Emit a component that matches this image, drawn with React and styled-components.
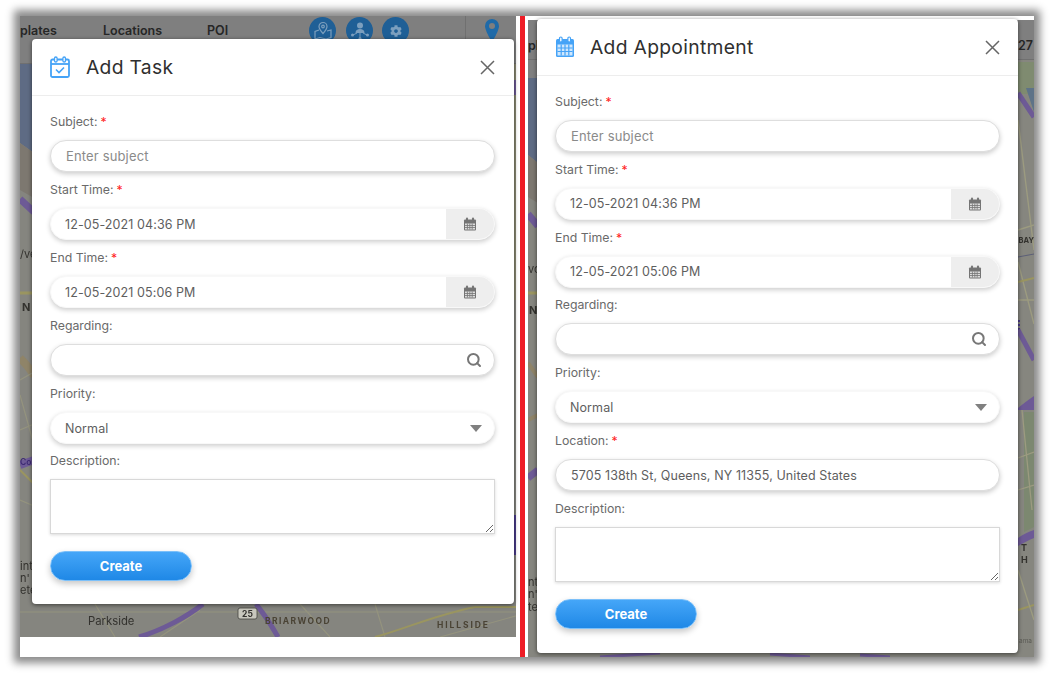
import React from "react";
import styled, { createGlobalStyle } from "styled-components";
import { FaCog } from "react-icons/fa";
import { Search } from "lucide-react";

const FONT = `Inter, "Open Sans", "Liberation Sans", sans-serif`;

const Global = createGlobalStyle`
  html, body { margin: 0; padding: 0; background: #fff; }
  body { font-family: ${FONT}; width: 1054px; height: 673px; overflow: hidden; }
  * { box-sizing: border-box; }
`;

const Page = styled.div`
  padding: 16px 20px;
`;
const Frame = styled.div`
  width: 1014px;
  height: 641px;
  display: flex;
  align-items: flex-start;
  background: #fff;
  box-shadow: 0 0 8px 6px #8c8c8c;
`;
const Panel = styled.section`
  position: relative;
  flex: none;
  width: ${(p) => p.$width}px;
  height: ${(p) => p.$height}px;
  margin-top: ${(p) => p.$top || 0}px;
  margin-left: ${(p) => p.$left || 0}px;
`;
const Divider = styled.div`
  flex: none;
  width: 4.5px;
  height: 641px;
  margin-left: 4px;
  background: #ee1c25;
`;
const Backdrop = styled.svg`
  position: absolute;
  inset: 0;
  display: block;
  filter: blur(0.6px);
`;
const TopBar = styled.div`
  position: relative;
  display: flex;
  align-items: center;
  height: ${(p) => p.$height}px;
  padding: ${(p) => p.$padTop}px 0 ${(p) => p.$padBottom}px;
  color: #262626;
  font-size: 12.5px;
  font-weight: 600;
  overflow: hidden;
  border-bottom: 1px solid #707070;
  background: #7f7f7f;
`;
const NavText = styled.span`
  flex: none;
  width: ${(p) => p.$width}px;
  margin-left: ${(p) => p.$gap}px;
  white-space: nowrap;
`;
const RoundButton = styled.span`
  flex: none;
  width: 27px;
  height: 27px;
  margin-left: ${(p) => p.$gap}px;
  border-radius: 50%;
  background: #1f5f96;
  color: #7c9fbe;
  display: flex;
  align-items: center;
  justify-content: center;
`;
const VRule = styled.span`
  flex: none;
  align-self: flex-start;
  width: 1px;
  height: 47px;
  margin-left: 56px;
  background: #707070;
`;
const PinSlot = styled.span`
  flex: none;
  margin-left: 19px;
  display: flex;
`;

const Modal = styled.div`
  position: absolute;
  left: ${(p) => p.$left}px;
  top: ${(p) => p.$top}px;
  width: ${(p) => p.$width}px;
  background: #fff;
  border-radius: 4px;
  box-shadow: 0 1px 4px rgba(0, 0, 0, 0.55);
`;
const ModalHeader = styled.header`
  display: flex;
  align-items: center;
  height: 57px;
  padding: 0 ${(p) => p.$right}px 0 18px;
  border-bottom: 1px solid #ededed;
`;
const IconSlot = styled.span`
  flex: none;
  width: ${(p) => p.$width}px;
  display: flex;
`;
const Title = styled.h2`
  flex: 1;
  margin: 0;
  font-size: 19.3px;
  font-weight: 400;
  letter-spacing: 0.3px;
  color: #2f2f2f;
`;
const Close = styled.svg`
  display: block;
  flex: none;
`;
const Body = styled.div`
  padding: 17px ${(p) => p.$right}px ${(p) => p.$bottom}px 18px;
`;
const Field = styled.div`
  margin-bottom: ${(p) => p.$gap}px;
`;
const Label = styled.label`
  display: block;
  height: 18px;
  margin-top: ${(p) => p.$lift || 0}px;
  margin-bottom: 9px;
  font-size: 12.3px;
  line-height: 18px;
  color: #6a6a6a;
`;
const Star = styled.span`
  color: #f22;
  margin-left: 3px;
`;
const Control = styled.div`
  display: flex;
  align-items: center;
  height: 32px;
  border-radius: 16px;
  background: #fff;
  overflow: hidden;
  border: 1px solid ${(p) => (p.$bare ? "#f8f8f8" : "#dedede")};
  box-shadow: 0 2px 5px rgba(0, 0, 0, 0.2);
  font-size: ${(p) => (p.$placeholder ? "13px" : "12.5px")};
  letter-spacing: ${(p) => (p.$placeholder ? "0.15px" : "0.1px")};
  color: ${(p) => (p.$placeholder ? "#8a8a8a" : "#5e5e5e")};
`;
const Value = styled.span`
  flex: 1;
  padding-left: ${(p) => p.$pad}px;
  white-space: nowrap;
`;
const Addon = styled.span`
  flex: none;
  width: 48px;
  align-self: stretch;
  background: #eee;
  display: flex;
  align-items: center;
  justify-content: center;
`;
const SearchSlot = styled.span`
  display: flex;
  color: #777;
  margin-right: 12px;
`;
const Caret = styled.span`
  flex: none;
  margin-right: 12px;
  width: 0;
  height: 0;
  border-left: 6px solid transparent;
  border-right: 6px solid transparent;
  border-top: 7px solid #808080;
`;
const TextArea = styled.textarea`
  display: block;
  width: 100%;
  height: 55px;
  margin: 0 0 17px;
  padding: 0;
  background: #fff;
  border: 1px solid #d8d8d8;
  border-radius: 0;
  outline: none;
  box-shadow: 0 1px 3px rgba(0, 0, 0, 0.15);
`;
const Submit = styled.button`
  display: block;
  width: 142px;
  height: 30px;
  padding: 0;
  border: 1px solid #7cc0f9;
  border-radius: 15px;
  background: linear-gradient(#45a6f8, #1f88e6);
  box-shadow: 0 3px 6px rgba(0, 0, 0, 0.22);
  color: #fff;
  font-family: ${FONT};
  font-size: 13px;
  font-weight: 700;
`;

const CalendarMini = () => (
  <svg width="14" height="14" viewBox="0 0 14 14">
    <rect x="1" y="2.5" width="12" height="11" rx="1" fill="#747474" />
    <rect x="3" y="0.5" width="2" height="4" rx="1" fill="#747474" />
    <rect x="9" y="0.5" width="2" height="4" rx="1" fill="#747474" />
    <path d="M2 6.5h10v6H2z" fill="#ddd" />
    <path d="M2 8.5h10M2 10.5h10M4.4 6.5v6M6.8 6.5v6M9.2 6.5v6" stroke="#747474" strokeWidth=".8" />
  </svg>
);
const TaskIcon = () => (
  <svg width="20" height="22" viewBox="0 0 20 22" fill="none">
    <rect x="1" y="3.5" width="18" height="17.5" rx="1.5" stroke="#45a3f7" strokeWidth="1.8" />
    <path d="M1 8h18" stroke="#45a3f7" strokeWidth="1.8" />
    <rect x="4.5" y="1" width="2.6" height="5" rx="1.3" fill="#fff" stroke="#45a3f7" strokeWidth="1.3" />
    <rect x="12.9" y="1" width="2.6" height="5" rx="1.3" fill="#fff" stroke="#45a3f7" strokeWidth="1.3" />
    <path d="M6 13.5l3 3 5-5" stroke="#45a3f7" strokeWidth="1.6" />
  </svg>
);
const AppointmentIcon = () => (
  <svg width="20" height="22" viewBox="0 0 20 22" fill="none">
    <rect x="1" y="3" width="18" height="18" rx="1.5" fill="#45a3f7" />
    <rect x="4.5" y="1" width="2.6" height="5" rx="1.3" fill="#fff" stroke="#45a3f7" strokeWidth="1.2" />
    <rect x="12.9" y="1" width="2.6" height="5" rx="1.3" fill="#fff" stroke="#45a3f7" strokeWidth="1.2" />
    <path d="M2.5 8.5h15v11h-15z" fill="#cfe7fd" />
    <path d="M2.5 12h15M2.5 15.5h15M6.2 8.5v11M10 8.5v11M13.8 8.5v11" stroke="#45a3f7" strokeWidth="1.2" />
  </svg>
);
const MapPinGlyph = () => (
  <svg width="20" height="20" viewBox="0 0 20 20" fill="none" stroke="currentColor" strokeWidth="1.2">
    <path d="M10 1.5a4 4 0 0 1 4 4c0 2.6-4 7-4 7s-4-4.4-4-7a4 4 0 0 1 4-4z" />
    <circle cx="10" cy="5.5" r="1.3" />
    <path d="M6 9l-4 1.5V18l5-1.5 6 1.5 5-1.5V9l-4 1" />
  </svg>
);
const NetworkGlyph = () => (
  <svg width="20" height="20" viewBox="0 0 20 20" fill="currentColor">
    <circle cx="10" cy="4.5" r="3" />
    <path d="M5.5 12c0-3 2-4 4.5-4s4.5 1 4.5 4z" />
    <circle cx="2.5" cy="14" r="1.5" />
    <circle cx="10" cy="17.5" r="1.5" />
    <circle cx="17.5" cy="14" r="1.5" />
    <path d="M3 14l4-2M17 14l-4-2M10 12v5" stroke="currentColor" />
  </svg>
);
const BigPin = () => (
  <svg width="14" height="23" viewBox="0 0 14 23">
    <path d="M7 0a7 7 0 0 1 7 7c0 5-7 16-7 16S0 12 0 7a7 7 0 0 1 7-7z" fill="#1f6aa8" />
    <circle cx="7" cy="7" r="3" fill="#7f7f7f" />
  </svg>
);
const CloseIcon = () => (
  <Close width="15" height="15" viewBox="0 0 15 15" fill="none" stroke="#666" strokeWidth="1.5">
    <path d="M1 1l13 13M14 1L1 14" />
  </Close>
);

const mapFont = { fontFamily: "Inter, sans-serif" };
const labelStyle = { ...mapFont, fill: "#33322e" };
const districtStyle = { ...mapFont, fill: "#4a4335" };
const highwayLabelStyle = { ...mapFont, fill: "#3d2a73" };
const PURPLE = "#6d5a96";
const ROAD = "#94937e";
const YELLOW = "#9a9560";

const LeftMap = () => (
  <Backdrop width="496" height="621" viewBox="20 16 496 621">
    <rect x="20" y="16" width="496" height="621" fill="#85857f" />
    <path d="M20 63h14v90l-14-10z" fill="#5e6b84" />
    <path d="M20 143l14 10v45l-14-8z" fill="#7d7870" />
    <path d="M20 199l14 13" stroke={PURPLE} strokeWidth="7" />
    <path d="M20 293h14" stroke={YELLOW} strokeWidth="3" />
    <path d="M20 358c6 6 10 10 14 18" stroke="#8f8468" strokeWidth="8" fill="none" />
    <path d="M20 380l14-8M20 430l14-6M20 500l14 6M20 395l14 50" stroke={ROAD} strokeWidth="1.2" fill="none" />
    <path d="M20 465l14-5" stroke={PURPLE} strokeWidth="8" />
    <path d="M20 470l14 14" stroke={YELLOW} strokeWidth="2" />
    <text x="20" y="465" fontSize="8.5" fontWeight="600" style={highwayLabelStyle}>Co</text>
    <text x="20" y="258" fontSize="11" style={labelStyle}>/ve</text>
    <text x="22" y="311" fontSize="11" fontWeight="700" style={labelStyle}>N</text>
    <text x="20" y="570" fontSize="11" style={labelStyle}>int</text>
    <text x="20" y="582" fontSize="11" style={labelStyle}>n'</text>
    <text x="20" y="594" fontSize="11" style={labelStyle}>ete</text>
    <path d="M20 612h500M95 604l20 33M200 610l-40 27M300 604l30 33M375 604l10 33M440 637l90-25" stroke={ROAD} strokeWidth="1.2" fill="none" />
    <path d="M203 604c-15 12-40 26-64 33" stroke={PURPLE} strokeWidth="5" fill="none" />
    <path d="M256 604c8 10 16 22 22 33" stroke={PURPLE} strokeWidth="5" fill="none" />
    <path d="M375 637c30-8 60-22 100-30h41" stroke={YELLOW} strokeWidth="2" fill="none" />
    <rect x="238" y="608" width="19" height="11" rx="2" fill="#c8c7bd" stroke="#44443f" strokeWidth=".8" />
    <text x="247.5" y="617" textAnchor="middle" fontSize="8.5" fontWeight="700" style={labelStyle}>25</text>
    <text x="88" y="625" fontSize="11.3" style={labelStyle}>Parkside</text>
    <text x="265" y="624" fontSize="8.5" fontWeight="700" letterSpacing="1.4" style={districtStyle}>BRIARWOOD</text>
    <text x="437" y="628" fontSize="8.5" fontWeight="700" letterSpacing="1.9" style={districtStyle}>HILLSIDE</text>
    <path d="M515 60v240" stroke="#8c8a6d" strokeWidth="1.4" />
    <path d="M515 80v15" stroke={PURPLE} strokeWidth="2" />
    <path d="M515 515v40" stroke="#4a3a8a" strokeWidth="2" />
  </Backdrop>
);

const RightMap = () => (
  <Backdrop width="506" height="637" viewBox="528 20 506 637">
    <rect x="528" y="20" width="506" height="637" fill="#86867f" />
    <rect x="528" y="20" width="10" height="58" fill="#7f7f7f" />
    <path d="M528 78h10v85l-10-8z" fill="#5e6b84" />
    <path d="M528 155l10 8v40l-10-6z" fill="#7d7870" />
    <path d="M528 214l10 12" stroke={PURPLE} strokeWidth="7" />
    <path d="M528 293h10" stroke={YELLOW} strokeWidth="3" />
    <path d="M528 363l10 14M528 420l10-5" stroke="#8f8468" strokeWidth="4" />
    <path d="M528 478l10-8" stroke={PURPLE} strokeWidth="7" />
    <text x="528" y="273" fontSize="11" style={labelStyle}>vc</text>
    <text x="529" y="314" fontSize="11" fontWeight="700" style={labelStyle}>N</text>
    <text x="528" y="586" fontSize="11" style={labelStyle}>nt</text>
    <text x="528" y="598" fontSize="11" style={labelStyle}>n'</text>
    <text x="528" y="611" fontSize="11" style={labelStyle}>te</text>
    <path d="M1018 62h16v32h-16z" fill="#7f8b70" />
    <path d="M1026 88l8 0v24z" fill="#5e7388" />
    <path d="M1018 93l16 24" stroke={PURPLE} strokeWidth="5" />
    <path d="M1018 120l16 130M1018 230l16-5M1018 262l16 62M1018 300h16" stroke="#9c9b80" strokeWidth="1.4" fill="none" />
    <path d="M1018 282l16-4" stroke={YELLOW} strokeWidth="2" />
    <path d="M1018 257l16-3" stroke="#5c5f78" strokeWidth="1" />
    <text x="1018.5" y="243" fontSize="7.5" fontWeight="700" style={labelStyle}>BAY</text>
    <path d="M1019 320v14" stroke="#4a3a8a" strokeWidth="2" strokeDasharray="2 2" />
    <path d="M1018 330l16 30" stroke={PURPLE} strokeWidth="5" />
    <path d="M1018 408c5-4 10-8 16-12v14h-16z" fill={PURPLE} />
    <path d="M1024 412h10v115l-10 5z" fill="#7c8870" />
    <path d="M1018 538c6-4 10-6 16-8v8c-6 2-10 5-16 8z" fill={PURPLE} />
    <path d="M1022 410l10 100M1018 490l16-5M1018 458l16-6" stroke="#9c9b80" strokeWidth="1.3" fill="none" />
    <text x="1021" y="551" fontSize="9" fontWeight="700" style={labelStyle}>T</text>
    <text x="1021" y="563" fontSize="9" fontWeight="700" style={labelStyle}>H</text>
    <path d="M1018 610l16-5" stroke={YELLOW} strokeWidth="2" />
    <path d="M1018 570l16 50" stroke="#9c9b80" strokeWidth="1.3" />
    <text x="1019" y="643" fontSize="6.5" style={{ ...mapFont, fill: "#5c5c56" }}>ama</text>
    <path d="M600 657l60-4M770 654l40 3M860 655l30 2" stroke={PURPLE} strokeWidth="3" />
  </Backdrop>
);

const TextField = ({ label, required, gap, placeholder, value }) => (
  <Field $gap={gap}>
    <Label>
      {label}
      {required && <Star>*</Star>}
    </Label>
    <Control $placeholder={!!placeholder}>
      <Value $pad={15}>{placeholder || value}</Value>
    </Control>
  </Field>
);
const DateField = ({ label, gap, value }) => (
  <Field $gap={gap}>
    <Label>
      {label}
      <Star>*</Star>
    </Label>
    <Control $bare>
      <Value $pad={14}>{value}</Value>
      <Addon>
        <CalendarMini />
      </Addon>
    </Control>
  </Field>
);
const SearchField = ({ label, gap }) => (
  <Field $gap={gap}>
    <Label>{label}</Label>
    <Control>
      <Value $pad={15} />
      <SearchSlot>
        <Search size={16} strokeWidth={3} />
      </SearchSlot>
    </Control>
  </Field>
);
const SelectField = ({ label, gap, value }) => (
  <Field $gap={gap}>
    <Label>{label}</Label>
    <Control $bare>
      <Value $pad={14}>{value}</Value>
      <Caret />
    </Control>
  </Field>
);

const Dialog = ({ title, icon, iconWidth, left, top, width, right, location, gap, lift, bottom }) => (
  <Modal $left={left} $top={top} $width={width}>
    <ModalHeader $right={right}>
      <IconSlot $width={iconWidth}>{icon}</IconSlot>
      <Title>{title}</Title>
      <CloseIcon />
    </ModalHeader>
    <Body $bottom={bottom} $right={right}>
      <TextField label="Subject:" required gap={gap} placeholder="Enter subject" />
      <DateField label="Start Time:" gap={gap} value="12-05-2021 04:36 PM" />
      <DateField label="End Time:" gap={gap} value="12-05-2021 05:06 PM" />
      <SearchField label="Regarding:" gap={gap} />
      <SelectField label="Priority:" gap={gap} value="Normal" />
      {location && <TextField label="Location:" required gap={gap} value={location} />}
      <Label $lift={lift}>Description:</Label>
      <TextArea />
      <Submit>Create</Submit>
    </Body>
  </Modal>
);

export default function App() {
  return (
    <Page>
      <Global />
      <Frame>
        <Panel $width={496} $height={621}>
          <LeftMap />
          <TopBar $height={48} $padTop={0} $padBottom={18}>
            <NavText $width={39} $gap={0}>plates</NavText>
            <NavText $width={63} $gap={44}>Locations</NavText>
            <NavText $width={25} $gap={41}>POI</NavText>
            <RoundButton $gap={77}>
              <MapPinGlyph />
            </RoundButton>
            <RoundButton $gap={10}>
              <NetworkGlyph />
            </RoundButton>
            <RoundButton $gap={9}>
              <FaCog size={12} />
            </RoundButton>
            <VRule />
            <PinSlot>
              <BigPin />
            </PinSlot>
          </TopBar>
          <Dialog
            title="Add Task"
            icon={<TaskIcon />}
            iconWidth={36}
            left={12}
            top={23}
            width={482}
            right={19}
            gap={9}
            lift={-1}
            bottom={23}
          />
        </Panel>
        <Divider />
        <Panel $width={506} $height={637} $top={4} $left={3.5}>
          <RightMap />
          <TopBar $height={40} $padTop={12} $padBottom={0}>
            <NavText $width={7} $gap={0}>pl</NavText>
            <NavText $width={16} $gap={483}>27</NavText>
          </TopBar>
          <Dialog
            title="Add Appointment"
            icon={<AppointmentIcon />}
            iconWidth={35}
            left={9}
            top={-1}
            width={481}
            right={18}
            location="5705 138th St, Queens, NY 11355, United States"
            gap={8.83}
            bottom={24}
          />
        </Panel>
      </Frame>
    </Page>
  );
}
